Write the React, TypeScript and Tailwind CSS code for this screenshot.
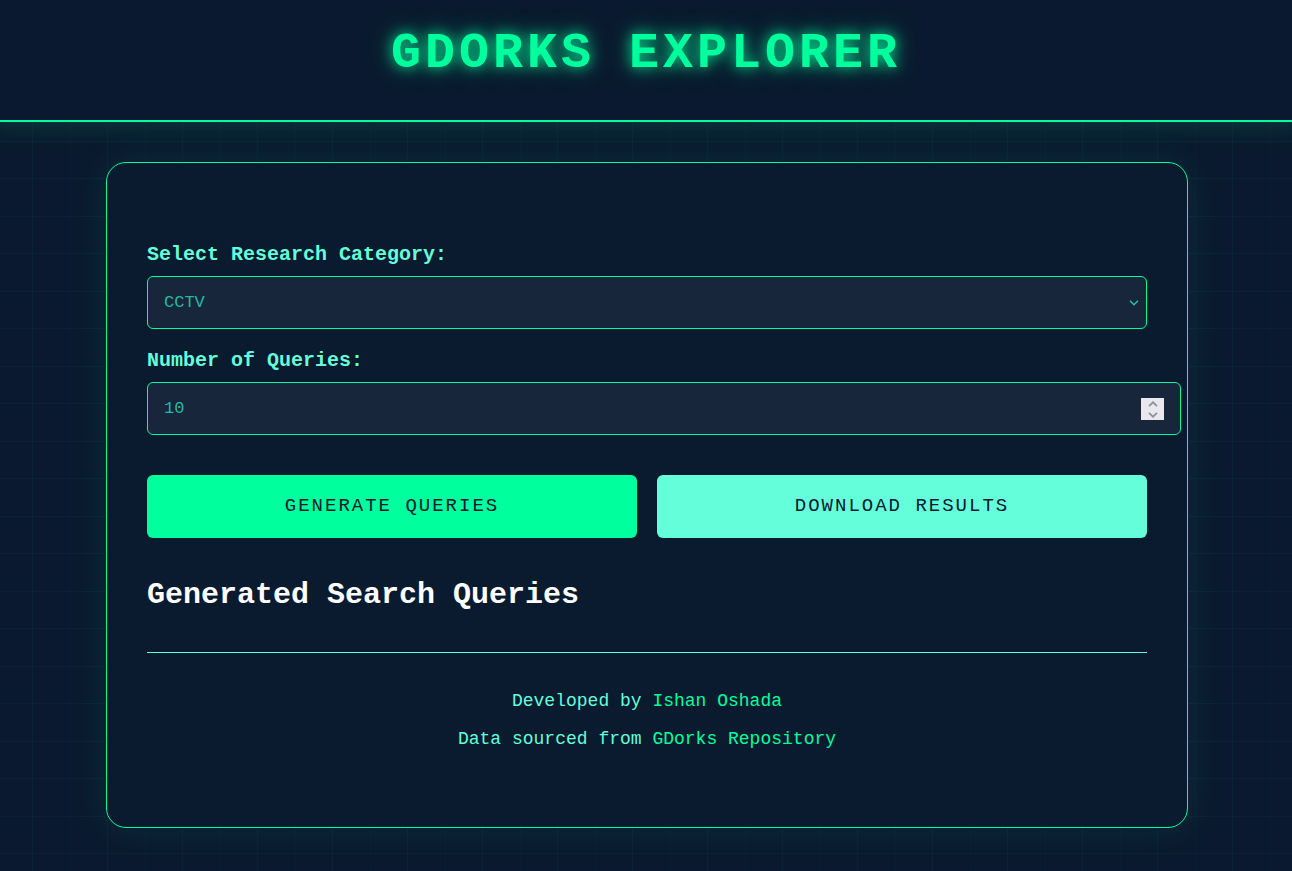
import { useState } from 'react';

const CATEGORIES = ['CCTV', 'Cameras', 'Login Pages', 'Documents', 'Databases'];

const FIELD =
  'block h-[53px] w-full appearance-none rounded-md border border-[#00ff9d] bg-[#18263b] px-4 text-[17px] text-[#26b8a1] outline-none [&::-webkit-inner-spin-button]:appearance-none';
const LABEL = 'mb-2 block text-xl leading-[26px] font-bold text-[#64ffda]';
const BUTTON =
  'h-[63px] flex-1 cursor-pointer rounded-md text-[19px] tracking-[2px] uppercase text-[#0a192f]';
const GRID =
  'bg-[linear-gradient(to_right,#00ff9d09_1px,transparent_1px),linear-gradient(to_right,#00ff9d04_1px,transparent_1px),linear-gradient(to_bottom,#00ff9d0b_1px,transparent_1px),linear-gradient(to_bottom,#00ff9d0b_1px,transparent_1px)] bg-size-[75px_75px] bg-position-[32px_0,70px_0,0_28px,0_66px]';

export default function App() {
  const [category, setCategory] = useState(CATEGORIES[0]);
  const [count, setCount] = useState(10);

  return (
    <div
      className={`min-h-screen overflow-x-hidden bg-[#0a192f] font-['Courier_New','Liberation_Mono',monospace] text-white ${GRID}`}
    >
      <header className="border-b-2 border-[#00ff9d] bg-[#0a192f] px-5 pt-6 pb-9 text-center shadow-[0_-8px_25px_12px_#00ff9d26]">
        <h1 className="text-[50px] leading-[60px] font-bold tracking-[4px] text-[#00ff9d] uppercase [text-shadow:0_0_13px_#00ff9dcc,0_0_25px_#00ff9d80]">
          GDorks Explorer
        </h1>
      </header>

      <div className="pt-10 pl-0.5">
        <main className="mx-auto max-w-[1082px] rounded-[20px] border border-[#00ff9d] bg-[#0a1a2f] px-10 pt-[79px] pb-[74px] shadow-[0_0_38px_#00ff9d1a]">
          <label htmlFor="category" className={LABEL}>
            Select Research Category:
          </label>
          <div className="relative">
            <select
              id="category"
              value={category}
              onChange={(e) => setCategory(e.target.value)}
              className={FIELD}
            >
              {CATEGORIES.map((c) => (
                <option key={c}>{c}</option>
              ))}
            </select>
            <svg
              className="pointer-events-none absolute top-6 right-2 h-1.5 w-2.5 text-[#28c3a9]"
              viewBox="0 0 10 6"
              fill="none"
              stroke="currentColor"
              strokeWidth="1.5"
              aria-hidden="true"
            >
              <path d="M1 .8 5 4.8 9 .8" />
            </svg>
          </div>

          <label htmlFor="count" className={`${LABEL} mt-[19px]`}>
            Number of Queries:
          </label>
          <div className="relative w-[calc(100%+34px)]">
            <input
              id="count"
              type="number"
              min={1}
              value={count}
              onChange={(e) => setCount(Number(e.target.value))}
              className={FIELD}
            />
            <div className="absolute top-4 right-[17px] flex h-[22px] w-[23px] flex-col bg-[#e9e9ed] text-[#8f8f9d]">
              <button
                type="button"
                aria-label="Increase"
                onClick={() => setCount(count + 1)}
                className="flex flex-1 items-center justify-center"
              >
                <svg width="10" height="6" viewBox="0 0 10 6" fill="none" stroke="currentColor" strokeWidth="1.7">
                  <path d="M1 5.2 5 1.3 9 5.2" />
                </svg>
              </button>
              <button
                type="button"
                aria-label="Decrease"
                onClick={() => setCount(Math.max(1, count - 1))}
                className="flex flex-1 items-center justify-center"
              >
                <svg width="10" height="6" viewBox="0 0 10 6" fill="none" stroke="currentColor" strokeWidth="1.7">
                  <path d="M1 .8 5 4.7 9 .8" />
                </svg>
              </button>
            </div>
          </div>

          <div className="mt-10 flex gap-5">
            <button type="button" className={`${BUTTON} bg-[#00ff9d]`}>
              Generate Queries
            </button>
            <button type="button" className={`${BUTTON} bg-[#64ffda]`}>
              Download Results
            </button>
          </div>

          <h2 className="mt-[38px] text-3xl leading-[38px] font-bold">Generated Search Queries</h2>

          <footer className="mt-[38px] border-t border-[#64ffda] pt-9 text-center text-lg leading-6 text-[#64ffda]">
            <p>
              Developed by{' '}
              <a href="#developer" className="text-[#00ff9d]">
                Ishan Oshada
              </a>
            </p>
            <p className="mt-3.5 mb-0.5">
              Data sourced from{' '}
              <a href="#repository" className="text-[#00ff9d]">
                GDorks Repository
              </a>
            </p>
          </footer>
        </main>
      </div>
    </div>
  );
}
